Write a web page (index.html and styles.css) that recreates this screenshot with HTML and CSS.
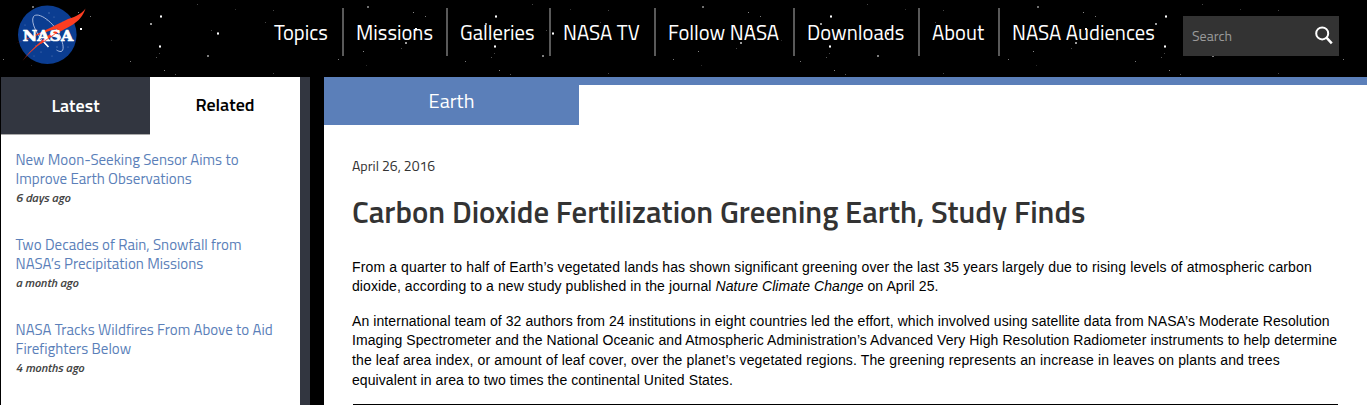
FILE: index.html
```html
<!DOCTYPE html>
<html lang="en">
  <head>
    <meta charset="utf-8">
    <title>Carbon Dioxide Fertilization Greening Earth, Study Finds | NASA</title>
    <link rel="stylesheet" href="styles.css">
  </head>
  <body>
    <header class="site-header">
      <a class="logo" href="#">
        <svg width="76" height="62" viewBox="13 4 76 62" role="img" aria-label="NASA">
          <circle cx="47.3" cy="34.7" r="29.3" fill="#0b3d91"/>
          <g fill="#8fa9d8" opacity="0.6">
            <circle cx="49" cy="13" r="0.7"/>
            <circle cx="54" cy="17" r="0.6"/>
            <circle cx="47" cy="20" r="0.5"/>
            <circle cx="25" cy="25" r="0.6"/>
            <circle cx="63" cy="22" r="0.6"/>
            <circle cx="36" cy="46" r="0.7"/>
            <circle cx="41" cy="52" r="0.6"/>
            <circle cx="34" cy="56" r="0.5"/>
            <circle cx="57" cy="47" r="0.7"/>
            <circle cx="52" cy="56" r="0.6"/>
            <circle cx="68" cy="47" r="0.6"/>
          </g>
          <path d="M46.5 45.500C38 37 30 22 33.500 16.500C38 11 54 22 60 36C64 45 64 51 61 51.500C59.500 51.600 58 51 56.500 50" fill="none" stroke="#b4c4e4" stroke-width="0.9"/>
          <path d="M44 42L48.500 47" stroke="#fff" stroke-width="1.600"/>
          <path d="M14.300 44C34 36 56 25 68 19C77 16.500 82 13 85.500 8.500C83 16 78.500 21 73 24.500C68 27.500 57 33 50 37.500C38 45 29 53 22.500 61C31 49 45 37 58 28.500C46 31.500 30 38 14.300 44Z" fill="#fc3d21"/>
          <text x="22.800" y="40.600" textLength="50.400" lengthAdjust="spacingAndGlyphs" class="logo-text">NASA</text>
          <path d="M41 43.500L57 32.500" stroke="#fc3d21" stroke-width="0.800"/>
        </svg>
      </a>
      <nav class="main-nav">
        <a class="topics" href="#">Topics</a>
        <a class="missions" href="#">Missions</a>
        <a class="galleries" href="#">Galleries</a>
        <a class="nasa-tv" href="#">NASA TV</a>
        <a class="follow" href="#">Follow NASA</a>
        <a class="downloads" href="#">Downloads</a>
        <a class="about" href="#">About</a>
        <a class="audiences" href="#">NASA Audiences</a>
      </nav>
      <div class="search">
        <span>Search</span>
        <svg width="18" height="19" viewBox="0 0 18 19" fill="none" stroke="#fff">
          <circle cx="7.200" cy="7.400" r="6" stroke-width="2"/>
          <path d="M11.500 11.700L16.800 17.300" stroke-width="2.500"/>
        </svg>
      </div>
    </header>

    <div class="page">
      <aside class="sidebar">
        <div class="tabs">
          <div class="tab">Latest</div>
          <div class="tab active">Related</div>
        </div>
        <ul class="related">
          <li>
            <a href="#">New Moon-Seeking Sensor Aims to<br>Improve Earth Observations</a>
            <time>6 days ago</time>
          </li>
          <li>
            <a href="#">Two Decades of Rain, Snowfall from<br>NASA’s Precipitation Missions</a>
            <time>a month ago</time>
          </li>
          <li>
            <a href="#">NASA Tracks Wildfires From Above to Aid<br>Firefighters Below</a>
            <time>4 months ago</time>
          </li>
        </ul>
      </aside>

      <main class="content">
        <div class="topic">Earth</div>
        <article>
          <div class="date">April 26, 2016</div>
          <h1>Carbon Dioxide Fertilization Greening Earth, Study Finds</h1>
          <p><span class="loose">From a quarter to half of Earth’s vegetated lands has shown significant greening over the last 35 years largely due to rising levels of atmospheric carbon</span><br>dioxide, according to a new study published in the journal <em>Nature Climate Change</em> on April 25.</p>
          <p>An international team of 32 authors from 24 institutions in eight countries led the effort, which involved using satellite data from NASA’s Moderate Resolution<br>Imaging Spectrometer and the National Oceanic and Atmospheric Administration’s Advanced Very High Resolution Radiometer instruments to help determine<br><span class="loose">the leaf area index, or amount of leaf cover, over the planet’s vegetated regions. The greening represents an increase in leaves on plants and trees</span><br>equivalent in area to two times the continental United States.</p>
          <hr>
        </article>
      </main>
    </div>
  </body>
</html>
```

FILE: styles.css
```css
* {
  box-sizing: border-box;
}
body {
  margin: 0;
  height: 405px;
  overflow: hidden;
  background: #000;
  font-family: "Titillium Web", Roboto, sans-serif;
}
a {
  text-decoration: none;
}

/* Header, the star field repeats every 335px */
.site-header {
  display: flex;
  height: 77px;
  padding-left: 13px;
  background-color: #000;
  background-image:
    radial-gradient(circle at 161px 16.5px, #fff 0.8px, transparent 1.5px),
    radial-gradient(circle at 160px 46.5px, #fff 0.8px, transparent 1.5px),
    radial-gradient(circle at 218px 33.5px, #fff 0.8px, transparent 1.5px),
    radial-gradient(circle at 81px 29px, #fff 0.8px, transparent 1.4px),
    radial-gradient(circle at 151px 24px, #bbb 0.6px, transparent 1.2px),
    radial-gradient(circle at 71px 43px, #bbb 0.6px, transparent 1.2px),
    radial-gradient(circle at 208px 56px, #999 0.6px, transparent 1.2px),
    radial-gradient(circle at 33px 7px, #888 0.6px, transparent 1.2px),
    radial-gradient(circle at 78.5px 12.5px, #888 0.5px, transparent 1px),
    radial-gradient(circle at 90.5px 16.5px, #777 0.5px, transparent 1px),
    radial-gradient(circle at 28.5px 51.5px, #888 0.5px, transparent 1px),
    radial-gradient(circle at 3.5px 59.5px, #777 0.5px, transparent 1px),
    radial-gradient(circle at 130.5px 61.5px, #777 0.5px, transparent 1px),
    radial-gradient(circle at 164.5px 70.5px, #888 0.5px, transparent 1px),
    radial-gradient(circle at 66.5px 48.5px, #444 0.5px, transparent 1px),
    radial-gradient(circle at 159.5px 53.5px, #444 0.5px, transparent 1px),
    radial-gradient(circle at 156.5px 57.5px, #555 0.5px, transparent 1px),
    radial-gradient(circle at 175.5px 74.5px, #555 0.5px, transparent 1px),
    radial-gradient(circle at 197.5px 4.5px, #444 0.5px, transparent 1px),
    radial-gradient(circle at 235.5px 9.5px, #333 0.5px, transparent 1px),
    radial-gradient(circle at 273.5px 10.5px, #444 0.5px, transparent 1px),
    radial-gradient(circle at 265.5px 22.5px, #444 0.5px, transparent 1px),
    radial-gradient(circle at 211.5px 30.5px, #444 0.5px, transparent 1px),
    radial-gradient(circle at 273.5px 73.5px, #444 0.5px, transparent 1px),
    radial-gradient(circle at 31.5px 65.5px, #2a2a2a 0.5px, transparent 1px),
    radial-gradient(circle at 111.5px 40.5px, #2a2a2a 0.5px, transparent 1px);
  background-size: 335px 77px;
}
.logo {
  width: 76px;
  padding-top: 4px;
}
.logo svg {
  display: block;
}
.logo-text {
  font: bold 15.5px "DejaVu Serif", serif;
  fill: #fff;
  stroke: #fff;
  stroke-width: 0.7px;
}
.main-nav {
  display: flex;
  margin: 8px 0 0 173px;
}
.main-nav a {
  height: 48px;
  padding-left: 12px;
  border-right: 2px solid #595959;
  color: #fff;
  font-size: 20.6px;
  line-height: 49px;
  white-space: nowrap;
}
.main-nav a:last-child {
  border-right: 0;
}
.main-nav .topics { width: 82px; }
.main-nav .missions { width: 104px; }
.main-nav .galleries { width: 103px; }
.main-nav .nasa-tv { width: 105px; }
.main-nav .follow { width: 139px; }
.main-nav .downloads { width: 125px; }
.main-nav .about { width: 80px; }
.main-nav .audiences { width: 183px; }
.search {
  display: flex;
  justify-content: space-between;
  width: 156px;
  height: 40px;
  margin-top: 16px;
  padding: 10px 6px 0 9px;
  background: #333;
  color: #9a9a9a;
  font-size: 14px;
  line-height: 20px;
}

.page {
  display: flex;
  height: 328px;
}

/* Sidebar */
.sidebar {
  width: 309px;
  margin-left: 1px;
  border-right: 10px solid #323640;
  background: #fff;
}
.tabs {
  display: flex;
  height: 58px;
}
.tab {
  width: 149px;
  border-bottom: 1px solid #aaa;
  background: #323640;
  color: #fff;
  font-size: 18px;
  font-weight: 600;
  line-height: 57px;
  text-align: center;
}
.tab.active {
  width: 150px;
  border-bottom: 0;
  background: #fff;
  color: #000;
  line-height: 55px;
}
.related {
  margin: 0;
  padding: 15px 0 0 14.5px;
  list-style: none;
}
.related li {
  height: 85px;
  font-size: 15px;
  line-height: 19px;
}
.related a {
  color: #5b7fb9;
}
.related time {
  display: block;
  color: #444;
  font-size: 12.4px;
  font-style: italic;
  font-weight: 600;
}

/* Article */
.content {
  width: 1043px;
  margin-left: 14px;
  border-top: 8px solid #5b7fb9;
  background: #fff;
}
.topic {
  width: 255px;
  height: 40px;
  background: #5b7fb9;
  color: #fff;
  font-size: 20px;
  line-height: 32px;
  text-align: center;
}
article {
  padding: 31px 29px 0 28px;
}
.date {
  color: #333;
  font-size: 14px;
  line-height: 20px;
}
h1 {
  margin: 16px 0 25.6px;
  color: #333;
  font-size: 30.8px;
  font-weight: 600;
  line-height: 40px;
}
p {
  margin: 0 0 15px;
  color: #000;
  font-family: Arial, "Liberation Sans", sans-serif;
  font-size: 14px;
  line-height: 19.6px;
  letter-spacing: 0.08px;
  white-space: nowrap;
}
p .loose {
  letter-spacing: 0.125px;
}
hr {
  height: 2px;
  margin: -1px 0 0 1px;
  border: 0;
  background: #000;
}
```
